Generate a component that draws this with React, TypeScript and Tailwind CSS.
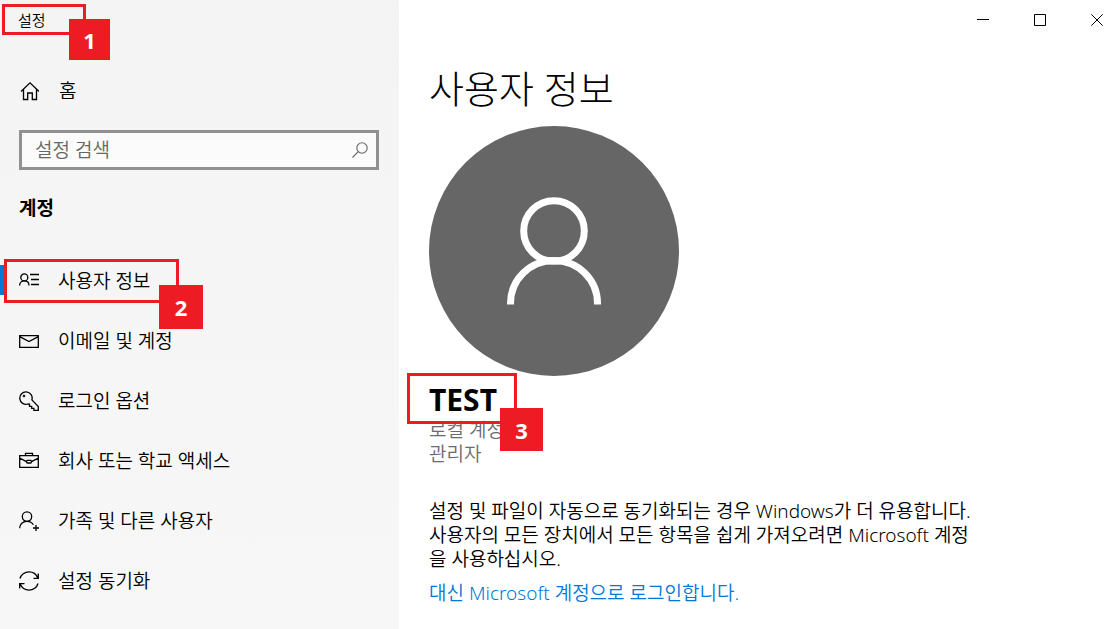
import React from "react";

interface IconProps extends React.PropsWithChildren<{}> {}

const Icon: React.FC<IconProps> = ({ children }) => (
  <svg
    className="h-5 w-5 shrink-0"
    viewBox="0 0 20 20"
    fill="none"
    stroke="currentColor"
    strokeWidth="1.3"
    aria-hidden="true"
  >
    {children}
  </svg>
);

const homeIcon = (
  <Icon>
    <path d="M2 10.5 11 1.8l9 8.7M4.5 8.5v10h4.2v-6.5h4.6v6.5h4.2v-10" />
  </Icon>
);

const items = [
  {
    label: "사용자 정보",
    active: true,
    icon: (
      <Icon>
        <circle cx="5.3" cy="6.4" r="3.5" />
        <path d="M.6 14.6c0-3 2-4.7 4.7-4.7s4.7 1.7 4.7 4.7M11 3.5h9M12 8.5h8M12 13.5h8" />
      </Icon>
    ),
  },
  {
    label: "이메일 및 계정",
    icon: (
      <Icon>
        <path d="M.7 4.6h18.6v11.8H.7zM.7 5.6 10 10.6l9.3-5" />
      </Icon>
    ),
  },
  {
    label: "로그인 옵션",
    icon: (
      <Icon>
        <path d="M12.9 8.9a6.2 6.2 0 1 0-4 4.1l1.6.1v2.3h2.2v2h2.2v1.9h4.4v-3.8z" />
        <circle cx="5" cy="5" r="1" fill="currentColor" strokeWidth=".6" />
      </Icon>
    ),
  },
  {
    label: "회사 또는 학교 액세스",
    icon: (
      <Icon>
        <path d="M.7 4.6h18.6v11.8H.7zM6.5 4.6V2.4h7v2.2M.7 7.2l6.8 3.4M19.3 7.2l-6.8 3.4" />
        <path d="M8.2 9.4h3.6l.9 1.2-.9 1.4H8.2l-.9-1.4z" />
      </Icon>
    ),
  },
  {
    label: "가족 및 다른 사용자",
    icon: (
      <Icon>
        <circle cx="8" cy="5.6" r="4.7" />
        <path d="M.7 17.3c0-4.2 3-7 7.3-7 2.9 0 5.2 1.3 6.4 3.5M17 14v6M14 17h6" />
      </Icon>
    ),
  },
  {
    label: "설정 동기화",
    icon: (
      <Icon>
        <path d="M1 7.5C2 3.7 5.7.9 10 .9c4 0 7.4 2.5 8.8 6M19.3 2.5v4.8h-4.8M19 12.5c-1 3.8-4.7 6.6-9 6.6-4 0-7.4-2.5-8.8-6M.7 17.5v-4.8h4.8" />
      </Icon>
    ),
  },
];

const Frame: React.FC<{ className: string }> = ({ className }) => (
  <span
    className={`pointer-events-none absolute z-10 border-3 border-[#ed1c24] ${className}`}
  />
);

const Badge: React.FC<{ className: string; children: React.ReactNode }> = ({
  className,
  children,
}) => (
  <span
    className={`pointer-events-none absolute z-20 flex items-center justify-center bg-[#ed1c24] text-[22px] font-bold text-white ${className}`}
  >
    {children}
  </span>
);

const Sidebar: React.FC = () => (
  <aside className="w-[399px] shrink-0 bg-linear-to-b from-[#f4f4f4] to-[#f7f7f7]">
    <div className="relative flex h-10 items-center pl-[18px] text-[15px]">
      설정
      <Frame className="left-0.5 top-1 h-[31px] w-21" />
      <Badge className="left-[69px] top-[19px] h-[41px] w-[41px]">1</Badge>
    </div>
    <a href="#" className="mt-[21px] flex h-[60px] items-center gap-5 pl-[19px]">
      {homeIcon}
      홈
    </a>
    <div className="relative mt-[9px] mr-5 ml-[19px]">
      <input
        type="text"
        aria-label="설정 검색"
        placeholder="설정 검색"
        className="block h-10 w-full border-3 border-[#919191] bg-[#fbfbfb] pl-[13px] pr-10 leading-8 outline-none placeholder:text-[#666]"
      />
      <svg
        className="absolute right-[11px] top-3 h-4 w-4 text-[#666]"
        viewBox="0 0 16 16"
        fill="none"
        stroke="currentColor"
        strokeWidth="1.1"
        aria-hidden="true"
      >
        <circle cx="10" cy="6" r="5.2" />
        <path d="M6.3 9.7.5 15.5" />
      </svg>
    </div>
    <h2 className="mt-[26px] pl-[19px] font-bold">계정</h2>
    <nav className="mt-[31px]">
      {items.map(({ label, icon, active }) => (
        <div key={label} className="relative">
          <a href="#" className="flex h-[60px] items-center gap-[19px] pl-[19px]">
            {icon}
            {label}
          </a>
          {active && (
            <>
              <span className="absolute left-0 top-3.5 h-[30px] w-1 bg-[#0078d7]" />
              <Frame className="left-1 top-2 h-11 w-[175px]" />
              <Badge className="left-[159px] top-[34px] h-11 w-11">2</Badge>
            </>
          )}
        </div>
      ))}
    </nav>
  </aside>
);

const WindowButtons: React.FC = () => (
  <div className="flex h-10 items-center justify-end gap-[45px] pr-3.5">
    {[
      { name: "최소화", d: "M0 5.5h12" },
      { name: "최대화", d: "M.5.5h11v11H.5z" },
      { name: "닫기", d: "M.3.3l11.4 11.4M11.7.3.3 11.7" },
    ].map(({ name, d }) => (
      <button key={name} type="button" aria-label={name} className="h-3 w-3">
        <svg
          className="h-3 w-3"
          viewBox="0 0 12 12"
          fill="none"
          stroke="currentColor"
        >
          <path d={d} />
        </svg>
      </button>
    ))}
  </div>
);

const Avatar: React.FC = () => (
  <svg
    className="mt-3.5 h-[250px] w-[250px]"
    viewBox="0 0 250 250"
    fill="none"
    stroke="#fff"
    strokeWidth="7"
    aria-hidden="true"
  >
    <circle cx="125" cy="125" r="125" fill="#666" stroke="none" />
    <circle cx="125" cy="105" r="30.3" />
    <path d="M81.5 178.5v-1a43.5 43 0 0 1 87 0v1" />
  </svg>
);

const App: React.FC = () => (
  <div
    lang="ko"
    className="flex min-h-screen bg-white font-['Noto_Sans','Noto_Sans_CJK_KR',sans-serif] text-[19px] leading-6 font-[350] text-black"
  >
    <Sidebar />
    <main className="min-w-0 flex-1">
      <WindowButtons />
      <div className="px-[30px]">
        <h1 className="mt-6 text-[38px] leading-12 font-light">사용자 정보</h1>
        <Avatar />
        <div className="relative">
          <p className="pt-2 text-[30px] leading-8 font-bold">TEST</p>
          <Frame className="-left-[22px] -top-[3px] h-[51px] w-[110px]" />
          <Badge className="left-[71px] top-8 h-[43px] w-[43px]">3</Badge>
        </div>
        <p className="mt-0.5 text-[#6b6b6b]">
          로컬 계정
          <br />
          관리자
        </p>
        <p className="mt-[33px] max-w-[550px] break-all">
          설정 및 파일이 자동으로 동기화되는 경우 Windows가 더 유용합니다.
          사용자의 모든 장치에서 모든 항목을 쉽게 가져오려면 Microsoft 계정을
          사용하십시오.
        </p>
        <a href="#" className="mt-2.5 inline-block text-[#0078d7]">
          대신 Microsoft 계정으로 로그인합니다.
        </a>
      </div>
    </main>
  </div>
);

export default App;
